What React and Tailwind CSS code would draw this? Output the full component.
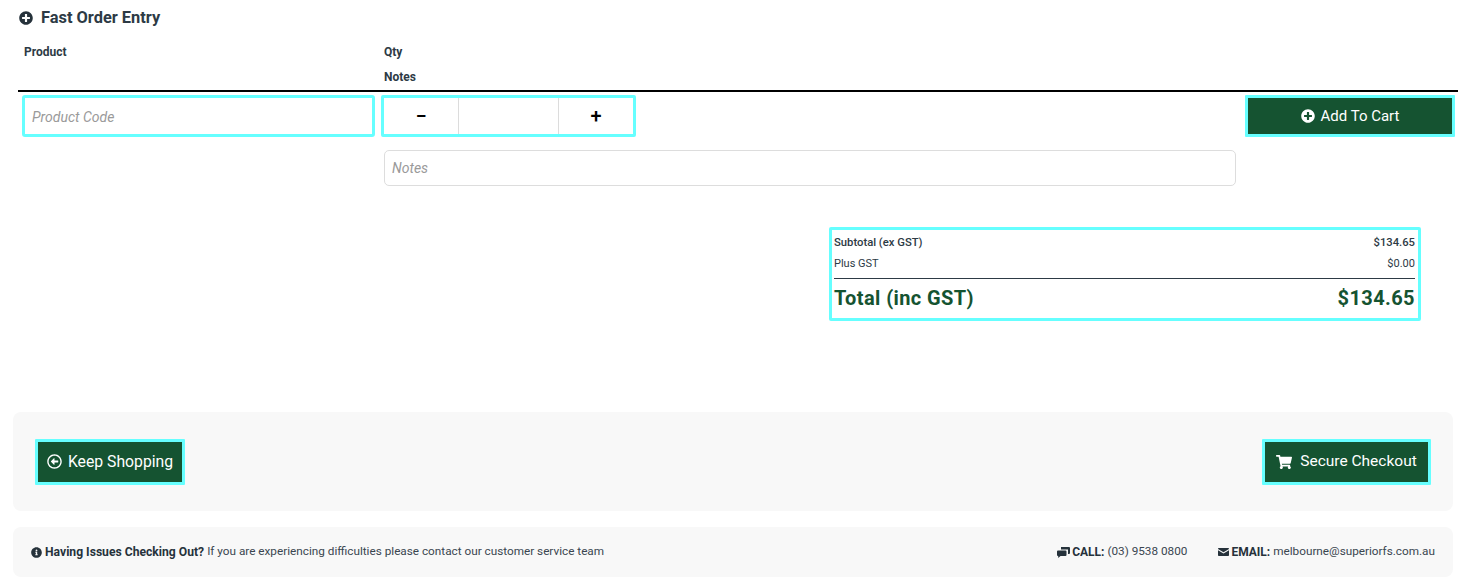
import { FaPlusCircle, FaRegArrowAltCircleLeft, FaShoppingCart, FaInfoCircle } from 'react-icons/fa';

const font = { fontFamily: 'Roboto, sans-serif' };

function GreenButton({ icon, label, className }) {
  return (
    <button className={`flex items-center justify-center bg-[#155331] text-white rounded-[1px] border-[3px] border-[#66ffff] ${className}`}>
      {icon}
      {label}
    </button>
  );
}

function ChatIcon() {
  return (
    <svg viewBox="0 0 13 11" className="w-[13px] h-[11px] mr-[2px] fill-[#26323b]">
      <path d="M4 0h8a1 1 0 0 1 1 1v5a1 1 0 0 1-1 1h-1V2.5H4z" />
      <path d="M1 3.5h7.5a1 1 0 0 1 1 1V8a1 1 0 0 1-1 1H3.5L1.2 11V9H1a1 1 0 0 1-1-1V4.5a1 1 0 0 1 1-1z" />
    </svg>
  );
}

function MailIcon() {
  return (
    <svg viewBox="0 0 11 8" className="w-[11px] h-[8px] mr-[2px] fill-[#26323b]">
      <path d="M0 .8A.8.8 0 0 1 .8 0h9.4a.8.8 0 0 1 .8.8v.3L5.5 4.3 0 1.1z" />
      <path d="M0 2.3l5.5 3.2L11 2.3v4.9a.8.8 0 0 1-.8.8H.8a.8.8 0 0 1-.8-.8z" />
    </svg>
  );
}

function FastOrderEntry() {
  return (
    <div className="ml-[18px] w-[1440px] text-[#2d3a45]">
      <h3 className="flex items-center h-[35px] pt-[1px] text-[16.4px] font-bold leading-none">
        <FaPlusCircle className="ml-px mr-[8px] -mt-[1px] text-[14px] text-[#26323b]" />
        Fast Order Entry
      </h3>
      <div className="border-b-2 border-black h-[57px] pt-[4px]">
        <div className="flex h-[25px] items-center text-[12px] font-bold pl-[6px]">
          <div className="w-[360px]">Product</div>
          <div>Qty</div>
        </div>
        <div className="flex h-[25px] items-center text-[12px] font-bold pl-[366px]">Notes</div>
      </div>
      <div className="flex items-start pt-[3px] pl-[4px] pr-[3px]">
        <input
          placeholder="Product Code"
          className="w-[353px] h-[42px] px-[7px] pt-[2px] text-[14px] italic bg-white rounded-[3px] border-[3px] border-[#66ffff] outline-none placeholder:text-[#9a9a9a]"
        />
        <div className="ml-[6px] w-[255px] h-[42px] flex items-center rounded-[2px] border-[3px] border-[#66ffff] text-black">
          <div className="w-[75px] h-full flex items-center justify-center text-[20px] font-medium border-r border-[#dcdcdc]">−</div>
          <div className="w-[99px] h-full" />
          <div className="flex-1 h-full flex items-center justify-center text-[20px] font-medium border-l border-[#dcdcdc]">+</div>
        </div>
        <GreenButton
          className="ml-auto w-[210px] h-[42px] text-[15px]"
          icon={<FaPlusCircle className="mr-[6px] text-[14px]" />}
          label="Add To Cart"
        />
      </div>
      <div className="pl-[366px] pt-[13px]">
        <input
          placeholder="Notes"
          className="block w-[852px] h-[36px] px-[7px] text-[14px] italic bg-white rounded-[5px] border border-[#dddddd] outline-none placeholder:text-[#9a9a9a]"
        />
      </div>
    </div>
  );
}

function Totals() {
  return (
    <div className="ml-[829px] mt-[41px] w-[592px] h-[94px] border-[3px] border-[#66ffff] rounded-[2px] pl-[2px] pr-[3px] text-[#2d3a45]">
      <div className="flex justify-between items-center h-[24px] pt-[2px] text-[11.25px] font-medium">
        <span>Subtotal (ex GST)</span>
        <span>$134.65</span>
      </div>
      <div className="flex justify-between items-center h-[25px] text-[11px] border-b border-[#2d3a45] pb-[4px]">
        <span>Plus GST</span>
        <span>$0.00</span>
      </div>
      <div className="flex justify-between items-center h-[38px] text-[20px] font-bold text-[#155331] tracking-[0.4px]">
        <span>Total (inc GST)</span>
        <span>$134.65</span>
      </div>
    </div>
  );
}

export default function App() {
  return (
    <div className="bg-white h-[583px] overflow-hidden" style={font}>
      <FastOrderEntry />
      <Totals />
      <div className="ml-[13px] w-[1440px] mt-[91px] h-[99px] bg-[#f8f8f8] rounded-[8px] flex items-center justify-between pl-[22px] pr-[22px]">
        <GreenButton
          className="w-[150px] h-[46px] text-[15.75px]"
          icon={<FaRegArrowAltCircleLeft className="mr-[6px] text-[15px]" />}
          label="Keep Shopping"
        />
        <GreenButton
          className="w-[169px] h-[46px] text-[15.5px]"
          icon={<FaShoppingCart className="mr-[8px] text-[16px]" />}
          label="Secure Checkout"
        />
      </div>
      <div className="ml-[13px] w-[1440px] mt-[16px] h-[50px] bg-[#f8f8f8] rounded-[8px] flex items-center pl-[18px] pr-[18px] text-[11.75px] text-[#3a4650]">
        <FaInfoCircle className="mr-[3px] text-[11px] text-[#26323b]" />
        <span className="font-bold text-[12.15px] text-[#26323b] mr-[3px]">Having Issues Checking Out?</span>
        If you are experiencing difficulties please contact our customer service team
        <div className="ml-auto flex items-center">
          <ChatIcon />
          <span className="font-bold text-[12px] text-[#26323b] mr-[3px]">CALL:</span>
          (03) 9538 0800
        </div>
        <div className="ml-[31px] flex items-center">
          <MailIcon />
          <span className="font-bold text-[12px] text-[#26323b] mr-[3px]">EMAIL:</span>
          melbourne@superiorfs.com.au
        </div>
      </div>
    </div>
  );
}
